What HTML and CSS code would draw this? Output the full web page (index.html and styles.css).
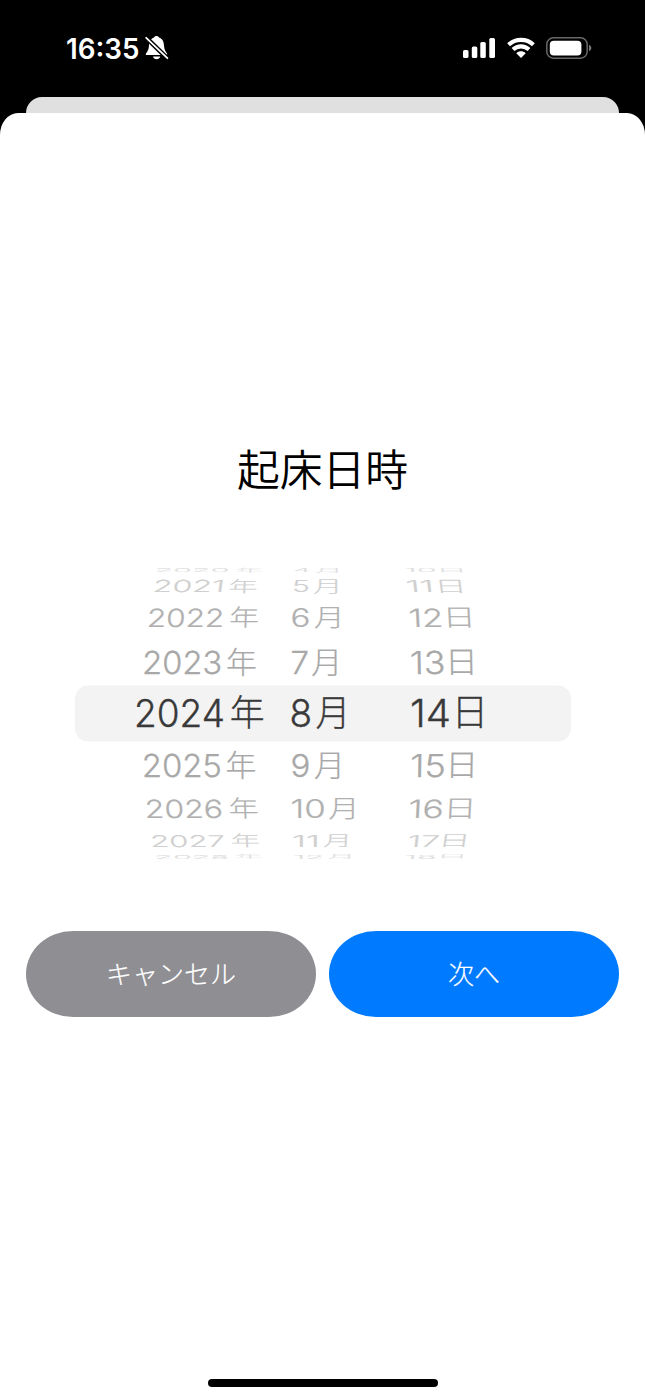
FILE: index.html
```html
<!DOCTYPE html>
<html lang="ja">
<head>
<meta charset="utf-8">
<title>起床日時</title>
<link rel="stylesheet" href="styles.css">
</head>
<body>
<div class="screen">
  <header class="status">
    <div class="status-left">
      <svg class="time" width="76" height="36" viewBox="0 0 76 36"><text class="clock" x="0" y="27.5" textLength="73.5" lengthAdjust="spacingAndGlyphs">16:35</text></svg>
      <svg class="bell" width="26" height="26" viewBox="0 0 26 26">
        <path fill="#fff" d="M2.5 20C1.8 20 1.6 19.2 2 18.4C3.5 16.4 4.7 14.5 4.9 11.5C5.1 6.2 6.5 3.5 10 2.4C10.8 .4 14.2 .4 15 2.4C18.5 3.5 19.9 6.2 20.1 11.5C20.3 14.5 21.5 16.4 23 18.4C23.4 19.2 23.2 20 22.5 20ZM9 21.5H16.2C15.5 25 9.7 25 9 21.5Z"/>
        <path stroke="#000" stroke-width="4.6" d="M0 .5L25 25"/>
        <path stroke="#fff" stroke-width="1.8" stroke-linecap="round" d="M2.2 2.8L23.4 23.2"/>
      </svg>
    </div>
    <div class="status-right">
      <svg width="33" height="24" viewBox="0 0 33 24" fill="#fff"><rect x="0" y="14" width="5.5" height="8" rx="1.6"/><rect x="8.8" y="10.5" width="5.5" height="11.5" rx="1.6"/><rect x="17.3" y="6" width="5.5" height="16" rx="1.6"/><rect x="26.3" y="2" width="5.7" height="20" rx="1.6"/></svg>
      <svg width="28" height="24" viewBox="0 0 28 24" fill="none" stroke="#fff" stroke-width="4.1"><path d="M1.6 8.7C8.4 2.2 19.6 2.2 26.4 8.7"/><path d="M6 13.6C10.5 9.3 17.5 9.3 22 13.6"/><path d="M9.3 17.2C12 14.7 16 14.7 18.7 17.2L14 22Z" fill="#fff" stroke="none"/></svg>
      <svg width="46" height="24" viewBox="0 0 46 24"><rect x=".8" y="1.8" width="40.4" height="20.4" rx="6.6" fill="none" stroke="#686868" stroke-width="1.5"/><rect x="3.8" y="4.7" width="31.6" height="14.8" rx="4" fill="#fff"/><path d="M43 8.8Q45.4 9.6 45.4 12T43 15.2Z" fill="#747474"/></svg>
    </div>
  </header>
  <div class="back-sheet"></div>
  <main class="sheet">
    <h1 class="title">起床日時</h1>
    <svg class="wheel" width="496" height="292" viewBox="75 568 496 292">
      <rect x="75" y="685.5" width="496" height="56" rx="13" fill="#f3f3f3"/>
      <g class="far2">
        <text class="n" textLength="91" lengthAdjust="spacingAndGlyphs" transform="translate(154.5 572) skewX(-6) scale(.82 .14)">2020</text><text class="u" transform="translate(235 571.5) skewX(-6) scale(.77 .14)">年</text>
        <text class="n" transform="translate(293 572) scale(.73 .14)">4</text><text class="u" transform="translate(315 571.5) scale(.77 .14)">月</text>
        <text class="n" textLength="40" lengthAdjust="spacingAndGlyphs" transform="translate(404 572) scale(.82 .14)">10</text><text class="u" transform="translate(436 571.5) skewX(10) scale(.88 .14)">日</text>
      </g>
      <g class="far1">
        <text class="n" textLength="91" lengthAdjust="spacingAndGlyphs" transform="translate(152 592) skewX(-8) scale(.79 .43)">2021</text><text class="u" transform="translate(228 591.5) skewX(-3) scale(.82 .43)">年</text>
        <text class="n" transform="translate(292 592) scale(.78 .43)">5</text><text class="u" transform="translate(313 591.5) scale(.82 .43)">月</text>
        <text class="n" textLength="34" lengthAdjust="spacingAndGlyphs" transform="translate(406.5 592) skewX(7) scale(.82 .43)">11</text><text class="u" transform="translate(435 591.5) skewX(7) scale(.9 .44)">日</text>
      </g>
      <g class="near2">
        <text class="n" textLength="91" lengthAdjust="spacingAndGlyphs" transform="translate(146.5 626.5) skewX(-3) scale(.85 .65)">2022</text><text class="u" transform="translate(229 625.8) skewX(-2) scale(.83 .65)">年</text>
        <text class="n" transform="translate(290.5 626.5) scale(.86 .65)">6</text><text class="u" transform="translate(314 625.8) scale(.85 .65)">月</text>
        <text class="n" textLength="41" lengthAdjust="spacingAndGlyphs" transform="translate(409 626.5) skewX(3) scale(.85 .65)">12</text><text class="u" transform="translate(443 625.8) skewX(3) scale(.92 .67)">日</text>
      </g>
      <g class="near1">
        <text class="n" textLength="91" lengthAdjust="spacingAndGlyphs" transform="translate(142 673.5) skewX(-1) scale(.88 .82)">2023</text><text class="u" transform="translate(226 672.5) scale(.86 .82)">年</text>
        <text class="n" transform="translate(290.5 673.5) scale(.86 .82)">7</text><text class="u" transform="translate(311.3 672.5) scale(.86 .82)">月</text>
        <text class="n" textLength="41" lengthAdjust="spacingAndGlyphs" transform="translate(410 673.5) skewX(1) scale(.87 .82)">13</text><text class="u" transform="translate(445 672.5) skewX(1) scale(.92 .85)">日</text>
      </g>
      <g class="current">
        <text class="n" textLength="91" lengthAdjust="spacingAndGlyphs" transform="translate(134 727)">2024</text><text class="u" transform="translate(229.8 726) scale(.97 1)">年</text>
        <text class="n" transform="translate(289.5 727) scale(.96 1)">8</text><text class="u" transform="translate(315.5 726) scale(.97 1)">月</text>
        <text class="n" textLength="41" lengthAdjust="spacingAndGlyphs" transform="translate(410 727)">14</text><text class="u" transform="translate(451.5 726) scale(1.02 1.03)">日</text>
      </g>
      <g class="near1">
        <text class="n" textLength="91" lengthAdjust="spacingAndGlyphs" transform="translate(142 776.5) skewX(1) scale(.88 .82)">2025</text><text class="u" transform="translate(225.5 775.5) scale(.86 .82)">年</text>
        <text class="n" transform="translate(290.5 776.5) scale(.86 .82)">9</text><text class="u" transform="translate(314 775.5) scale(.86 .82)">月</text>
        <text class="n" textLength="41" lengthAdjust="spacingAndGlyphs" transform="translate(410 776.5) skewX(-1) scale(.87 .82)">15</text><text class="u" transform="translate(445 775.5) skewX(-1) scale(.92 .85)">日</text>
      </g>
      <g class="near2">
        <text class="n" textLength="91" lengthAdjust="spacingAndGlyphs" transform="translate(145 818) skewX(2) scale(.86 .65)">2026</text><text class="u" transform="translate(229 817.3) skewX(2) scale(.83 .65)">年</text>
        <text class="n" textLength="41" lengthAdjust="spacingAndGlyphs" transform="translate(290.5 818) scale(.86 .65)">10</text><text class="u" transform="translate(328.5 817.3) scale(.86 .65)">月</text>
        <text class="n" textLength="41" lengthAdjust="spacingAndGlyphs" transform="translate(408 818) skewX(-3) scale(.86 .65)">16</text><text class="u" transform="translate(443 817.3) skewX(-3) scale(.92 .67)">日</text>
      </g>
      <g class="far1">
        <text class="n" textLength="91" lengthAdjust="spacingAndGlyphs" transform="translate(150.5 846.5) skewX(3) scale(.82 .42)">2027</text><text class="u" transform="translate(231 846) skewX(3) scale(.82 .42)">年</text>
        <text class="n" textLength="34" lengthAdjust="spacingAndGlyphs" transform="translate(292 846.5) scale(.82 .42)">11</text><text class="u" transform="translate(323 846) skewX(-3) scale(.8 .42)">月</text>
        <text class="n" textLength="39" lengthAdjust="spacingAndGlyphs" transform="translate(407 846.5) skewX(-7) scale(.82 .42)">17</text><text class="u" transform="translate(437.5 846) skewX(-8) scale(.9 .43)">日</text>
      </g>
      <g class="far2">
        <text class="n" textLength="91" lengthAdjust="spacingAndGlyphs" transform="translate(154.5 858.5) skewX(6) scale(.82 .14)">2028</text><text class="u" transform="translate(235 858) skewX(6) scale(.77 .14)">年</text>
        <text class="n" textLength="40" lengthAdjust="spacingAndGlyphs" transform="translate(293 858.5) scale(.78 .14)">12</text><text class="u" transform="translate(327.5 858) scale(.77 .14)">月</text>
        <text class="n" textLength="40" lengthAdjust="spacingAndGlyphs" transform="translate(404 858.5) scale(.82 .14)">18</text><text class="u" transform="translate(436 858) skewX(-10) scale(.88 .14)">日</text>
      </g>
    </svg>
    <div class="actions">
      <button class="btn cancel">キャンセル</button>
      <button class="btn next">次へ</button>
    </div>
    <div class="home"></div>
  </main>
</div>
</body>
</html>
```
FILE: styles.css
```css
* { box-sizing: border-box; }
body { margin: 0; background: #000; font-family: Inter, "Noto Sans CJK JP", sans-serif; }
svg { display: block; flex: none; }
.screen { width: 645px; height: 1400px; display: flex; flex-direction: column; overflow: hidden; background: #000; }
.status { height: 97px; flex: none; display: flex; justify-content: space-between; padding: 31px 53px 0 66px; }
.status-left { display: flex; }
.clock { font: 600 28px Inter, sans-serif; fill: #fff; }
.bell { margin: 4px 0 0 2px; }
.status-right { display: flex; gap: 11px; padding-top: 5px; }
.back-sheet { flex: none; height: 16px; margin: 0 26px; background: #e0e0e0; border-radius: 16px 16px 0 0; }
.sheet { flex: 1; background: #fff; border-radius: 18px 18px 0 0 / 22px 22px 0 0; display: flex; flex-direction: column; align-items: center; padding-top: 324px; }
.title { margin: 0; height: 60px; line-height: 60px; font-family: "Noto Sans CJK JP", sans-serif; font-weight: 350; font-size: 42.8px; color: #000; }
.wheel { margin-top: 71px; margin-left: 1px; overflow: visible; }
.n { font: 300 38.5px Inter, sans-serif; stroke: currentColor; stroke-width: .35px; }
.u { font: 300 36px "Noto Sans CJK JP", sans-serif; stroke: currentColor; stroke-width: .3px; }
.current { fill: #39393a; color: #39393a; }
.near1 { fill: #a8a8a8; color: #a8a8a8; }
.near2 { fill: #b0b0b0; color: #b0b0b0; }
.far1 { fill: #cfcfcf; color: #cfcfcf; }
.far2 { fill: #dedede; color: #dedede; }
.actions { width: 593px; margin-top: 71px; display: flex; gap: 13px; }
.btn { flex: 1; height: 86px; padding: 0 0 4px; border: 0; border-radius: 47px / 43px; color: #fff; font-family: "Noto Sans CJK JP", sans-serif; font-weight: 300; font-size: 26px; -webkit-text-stroke: .2px #fff; }
.cancel { background: #8e8e93; }
.next { background: #007aff; }
.home { width: 230px; height: 8px; margin: auto 0 13px; border-radius: 4px; background: #000; }
```
